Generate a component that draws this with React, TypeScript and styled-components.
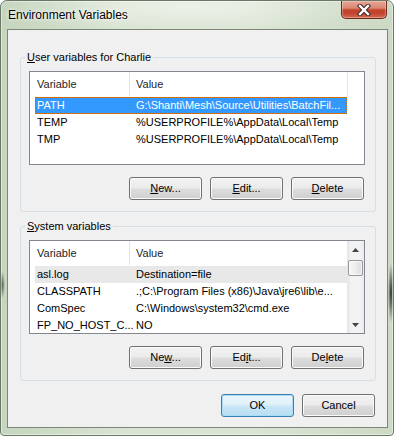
import React from "react";
import styled, { createGlobalStyle } from "styled-components";

const GlobalStyle = createGlobalStyle`
  html, body {
    margin: 0;
    padding: 0;
    background: #ffffff;
  }
  body {
    font-family: "Liberation Sans", Arial, sans-serif;
    font-size: 11px;
    color: #000000;
  }
`;

const Window = styled.div`
  width: 394px;
  height: 436px;
  box-sizing: border-box;
  display: flex;
  flex-direction: column;
  border: 1px solid #6b7868;
  border-radius: 7px 7px 4px 4px;
  overflow: hidden;
  box-shadow: inset 0 0 0 1px rgba(255, 255, 255, 0.45);
  background:
    radial-gradient(ellipse 3px 30px at 390px 292px, rgba(20, 24, 20, 0.9), rgba(20, 24, 20, 0)),
    radial-gradient(ellipse 3px 14px at 1px 284px, rgba(30, 34, 30, 0.7), rgba(30, 34, 30, 0)),
    radial-gradient(ellipse 190px 26px at 190px 6px, rgba(255, 255, 255, 0.5), rgba(255, 255, 255, 0)),
    linear-gradient(90deg, #c6d5be 0%, #d8e3d1 30%, #dae4d3 65%, #ccd9c4 100%);
`;

const TitleBar = styled.div`
  height: 28px;
  flex-shrink: 0;
  display: flex;
  align-items: flex-start;
  justify-content: space-between;
  padding: 0 6px 0 7px;
`;

const Title = styled.div`
  margin-top: 7px;
  font-size: 12px;
  line-height: 15px;
  text-shadow: 0 0 5px #ffffff, 0 0 2px #ffffff;
`;

const CloseButton = styled.div`
  width: 46px;
  height: 18px;
  box-sizing: border-box;
  border: 1px solid #6a2a20;
  border-top: none;
  border-radius: 0 0 5px 5px;
  background: linear-gradient(#e6a595 0%, #d98873 42%, #c4452e 52%, #c24430 72%, #d46a52 100%);
  box-shadow: inset 0 0 0 1px rgba(255, 255, 255, 0.3);
  display: flex;
  align-items: center;
  justify-content: center;
`;

const Client = styled.div`
  flex: 1;
  min-height: 0;
  margin: 0 5px 7px 6px;
  border: 1px solid #7b8779;
  background: #f0f0f0;
  display: flex;
  flex-direction: column;
  padding: 0 11px 0 12px;
`;

const Group = styled.fieldset<{ $gap: number }>`
  margin: ${(p) => p.$gap}px 0 0;
  padding: 6px 10px 11px 8px;
  border: 1px solid #d5dfe5;
  border-radius: 3px;
  min-inline-size: 0;
`;

const Legend = styled.legend`
  margin-left: -4px;
  padding: 0 2px;
  line-height: 15px;
`;

const ListView = styled.div`
  height: 94px;
  box-sizing: border-box;
  border: 1px solid #828790;
  background: #ffffff;
  display: flex;
  overflow: hidden;
`;

const ListMain = styled.div`
  flex: 1;
  min-width: 0;
`;

const Header = styled.div`
  display: grid;
  grid-template-columns: 100px 218px 1fr;
  height: 24px;
  margin-bottom: 1px;
`;

const HeaderCell = styled.div`
  padding: 1px 0 0 6px;
  line-height: 23px;
  border-right: 1px solid #e3e5e8;
  color: #1e1e1e;
  white-space: nowrap;
  overflow: hidden;
  &:first-child {
    padding-left: 7px;
  }
  &:nth-child(3) {
    border-right: none;
  }
`;

const Row = styled.div<{ $state?: "selected" | "inactive" }>`
  display: grid;
  grid-template-columns: 95px 217px;
  width: 312px;
  height: 17px;
  box-sizing: border-box;
  padding-top: 2px;
  margin-left: 5px;
  line-height: 13px;
  background: ${(p) =>
    p.$state === "selected" ? "#3399ff" : p.$state === "inactive" ? "#e8e8e8" : "transparent"};
  color: ${(p) => (p.$state === "selected" ? "#ffffff" : "#000000")};
  outline: ${(p) => (p.$state === "selected" ? "1px dotted #cc6600" : "none")};
  outline-offset: -1px;
`;

const Cell = styled.div`
  padding-left: 2px;
  white-space: nowrap;
  &:last-child {
    padding-left: 6px;
    overflow: hidden;
  }
`;

const ScrollBar = styled.div`
  width: 17px;
  flex-shrink: 0;
  display: flex;
  flex-direction: column;
  background: linear-gradient(90deg, #e4e4e4 0%, #f3f3f3 25%, #f3f3f3 75%, #ebebeb 100%);
`;

const ArrowBox = styled.div<{ $down?: boolean }>`
  height: 17px;
  flex-shrink: 0;
  display: flex;
  align-items: center;
  justify-content: center;
  margin-top: ${(p) => (p.$down ? "auto" : "0")};
`;

const Thumb = styled.div`
  height: 16px;
  margin: 2px 1px 0;
  box-sizing: border-box;
  border: 1px solid #979797;
  border-radius: 2px;
  background: linear-gradient(90deg, #f7f7f7 0%, #ececec 50%, #dcdcdc 100%);
  box-shadow: inset 0 0 0 1px rgba(255, 255, 255, 0.7);
`;

const ButtonRow = styled.div<{ $top: number }>`
  display: flex;
  justify-content: flex-end;
  gap: 8px;
  margin: ${(p) => p.$top}px 1px 0 0;
`;

const Button = styled.button<{ $primary?: boolean }>`
  width: 73px;
  height: 23px;
  padding: 0;
  box-sizing: border-box;
  border: 1px solid ${(p) => (p.$primary ? "#3c7fb1" : "#707070")};
  border-radius: 3px;
  background: ${(p) =>
    p.$primary
      ? "linear-gradient(#ecf6fc 0%, #dff0fa 48%, #c8e6f7 52%, #b8ddf2 100%)"
      : "linear-gradient(#f2f2f2 0%, #ebebeb 48%, #dddddd 52%, #cfcfcf 100%)"};
  box-shadow: inset 0 0 0 1px ${(p) => (p.$primary ? "#a9dbf6" : "#fbfbfb")};
  font-family: inherit;
  font-size: 11px;
  line-height: 21px;
  color: #000000;
  u {
    text-underline-offset: 1px;
  }
`;

const ArrowUp = () => (
  <svg width="7" height="4" viewBox="0 0 7 4">
    <polygon points="0,4 3.5,0 7,4" fill="#444444" />
  </svg>
);

const ArrowDown = () => (
  <svg width="7" height="4" viewBox="0 0 7 4">
    <polygon points="0,0 7,0 3.5,4" fill="#444444" />
  </svg>
);

type VarRow = { name: string; value: string; state?: "selected" | "inactive" };

const userVars: VarRow[] = [
  { name: "PATH", value: "G:\\Shanti\\Mesh\\Source\\Utilities\\BatchFil...", state: "selected" },
  { name: "TEMP", value: "%USERPROFILE%\\AppData\\Local\\Temp" },
  { name: "TMP", value: "%USERPROFILE%\\AppData\\Local\\Temp" },
];

const systemVars: VarRow[] = [
  { name: "asl.log", value: "Destination=file", state: "inactive" },
  { name: "CLASSPATH", value: ".;C:\\Program Files (x86)\\Java\\jre6\\lib\\e..." },
  { name: "ComSpec", value: "C:\\Windows\\system32\\cmd.exe" },
  { name: "FP_NO_HOST_C...", value: "NO" },
];

function VarList({ rows, scroll }: { rows: VarRow[]; scroll?: boolean }) {
  return (
    <ListView>
      <ListMain>
        <Header>
          <HeaderCell>Variable</HeaderCell>
          <HeaderCell>Value</HeaderCell>
          <HeaderCell />
        </Header>
        {rows.map((r) => (
          <Row key={r.name} $state={r.state}>
            <Cell>{r.name}</Cell>
            <Cell>{r.value}</Cell>
          </Row>
        ))}
      </ListMain>
      {scroll && (
        <ScrollBar>
          <ArrowBox>
            <ArrowUp />
          </ArrowBox>
          <Thumb />
          <ArrowBox $down>
            <ArrowDown />
          </ArrowBox>
        </ScrollBar>
      )}
    </ListView>
  );
}

export default function App() {
  return (
    <>
      <GlobalStyle />
      <Window>
        <TitleBar>
          <Title>Environment Variables</Title>
          <CloseButton>
            <svg width="14" height="12" viewBox="0 0 14 12">
              <path d="M3 2 L11 10 M11 2 L3 10" stroke="#3d2421" strokeWidth="4.4" strokeLinecap="square" />
              <path d="M3 2 L11 10 M11 2 L3 10" stroke="#ffffff" strokeWidth="2.4" strokeLinecap="square" />
            </svg>
          </CloseButton>
        </TitleBar>
        <Client>
          <Group $gap={20}>
            <Legend>
              <u>U</u>ser variables for Charlie
            </Legend>
            <VarList rows={userVars} />
            <ButtonRow $top={12}>
              <Button>
                <u>N</u>ew...
              </Button>
              <Button>
                <u>E</u>dit...
              </Button>
              <Button>
                <u>D</u>elete
              </Button>
            </ButtonRow>
          </Group>
          <Group $gap={7}>
            <Legend>
              <u>S</u>ystem variables
            </Legend>
            <VarList rows={systemVars} scroll />
            <ButtonRow $top={12}>
              <Button>
                Ne<u>w</u>...
              </Button>
              <Button>
                Ed<u>i</u>t...
              </Button>
              <Button>
                De<u>l</u>ete
              </Button>
            </ButtonRow>
          </Group>
          <ButtonRow $top={13}>
            <Button $primary>OK</Button>
            <Button>Cancel</Button>
          </ButtonRow>
        </Client>
      </Window>
    </>
  );
}
